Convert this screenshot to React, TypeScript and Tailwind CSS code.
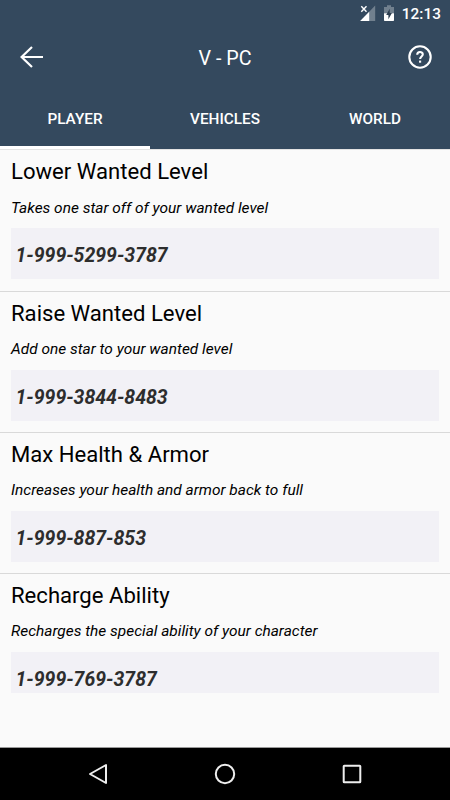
import React from 'react';

interface Cheat {
  title: string;
  description: string;
  code: string;
}

const tabs = ['PLAYER', 'VEHICLES', 'WORLD'];

const cheats: Cheat[] = [
  {
    title: 'Lower Wanted Level',
    description: 'Takes one star off of your wanted level',
    code: '1-999-5299-3787',
  },
  {
    title: 'Raise Wanted Level',
    description: 'Add one star to your wanted level',
    code: '1-999-3844-8483',
  },
  {
    title: 'Max Health & Armor',
    description: 'Increases your health and armor back to full',
    code: '1-999-887-853',
  },
  {
    title: 'Recharge Ability',
    description: 'Recharges the special ability of your character',
    code: '1-999-769-3787',
  },
];

const StatusBar: React.FC = () => (
  <div className="flex h-7 items-center justify-end pr-[9px] text-white">
    <svg width="16" height="17" viewBox="0 0 16 17" className="mr-[8px] mb-[1px]">
      <path d="M15.2 0.6V16H0.2Z" fill="#fff" fillOpacity="0.3" />
      <path d="M9.2 6.7V16H0.2Z" fill="#fff" />
      <path d="M1.3 1.3L6.5 6.7M6.5 1.3L1.3 6.7" stroke="#34495e" strokeWidth="3" />
      <path d="M1.3 1.3L6.5 6.7M6.5 1.3L1.3 6.7" stroke="#fff" strokeWidth="1.4" />
    </svg>
    <svg width="10" height="17" viewBox="0 0 10 17" className="mr-[8px] mb-[1px]">
      <path d="M3 0.3H7V2H10V8.3H0V2H3Z" fill="#fff" fillOpacity="0.3" />
      <path d="M0 8.3H10V15.2Q10 16 9.2 16H0.8Q0 16 0 15.2Z" fill="#fff" />
      <path d="M5.7 3.7L2.2 9.9H4.4V14.2L7.9 8H5.7Z" fill="#2b3d4f" />
    </svg>
    <span className="text-[15.3px] leading-5 font-medium tracking-[0.1px]">12:13</span>
  </div>
);

const Header: React.FC = () => (
  <div className="grid h-[62px] grid-cols-[1fr_auto_1fr] items-center pr-[17px] pb-[4px] pl-[19px] text-white">
    <button aria-label="Back" className="justify-self-start">
      <svg width="25" height="24" viewBox="0 0 25 24" fill="none" stroke="#fff" strokeWidth="2.2">
        <path d="M24 12H3M13 2L2.6 12L13 22" />
      </svg>
    </button>
    <h1 className="pt-[4px] pr-[2px] text-[19.7px] leading-6">V - PC</h1>
    <button aria-label="Help" className="justify-self-end">
      <svg width="26" height="26" viewBox="0 0 26 26" fill="none" stroke="#fff" strokeWidth="2.1">
        <circle cx="13" cy="13" r="10.7" />
        <path d="M10.2 10.7C10.2 7.2 15.8 7.2 15.8 10.3C15.8 12.4 13.1 12.6 13.1 15" />
        <path d="M13.1 16.6V18.7" />
      </svg>
    </button>
  </div>
);

const CheatItem: React.FC<{ cheat: Cheat }> = ({ cheat }) => (
  <div className="h-[141.2px] shrink-0 border-b border-[#d9d9d9] px-[11px] pt-[7px]">
    <h2 className="text-[22.1px] leading-7 text-black">{cheat.title}</h2>
    <p className="mt-[12.5px] text-[15.45px] leading-5 text-black italic">{cheat.description}</p>
    <div className="mt-[10.5px] flex h-[51px] items-center bg-[#f2f1f6] pt-[5px] pl-[4.5px]">
      <span className="text-[19.45px] leading-6 font-bold text-[#2d2d2d] italic">{cheat.code}</span>
    </div>
  </div>
);

const App: React.FC = () => {
  return (
    <div className="flex h-[800px] w-[450px] flex-col overflow-hidden bg-[#fafafa] font-['Roboto',sans-serif]">
      <header className="bg-[#34495e]">
        <StatusBar />
        <Header />
        <nav className="grid h-[59px] grid-cols-3 text-[15.3px] font-medium text-white">
          {tabs.map((tab, i) => (
            <button
              key={tab}
              className={`border-b-[3px] pt-[3px] ${i === 0 ? 'border-white' : 'border-transparent'}`}
            >
              {tab}
            </button>
          ))}
        </nav>
      </header>
      <main className="h-[544px] overflow-hidden border-t border-[#e3e3e3] pt-[0.4px]">
        {cheats.map((cheat) => (
          <CheatItem key={cheat.code} cheat={cheat} />
        ))}
      </main>
      <footer className="mt-auto grid h-[53px] grid-cols-[196px_58px_196px] items-center justify-items-center border-t border-[#999] bg-black">
        <svg width="20" height="22" viewBox="0 0 20 22" fill="none" stroke="#eee" strokeWidth="2" strokeLinejoin="round">
          <path d="M18 2V20L2 11Z" />
        </svg>
        <svg width="22" height="22" viewBox="0 0 22 22" fill="none" stroke="#eee" strokeWidth="2">
          <circle cx="11" cy="11" r="9.2" />
        </svg>
        <svg width="20" height="20" viewBox="0 0 20 20" fill="none" stroke="#eee" strokeWidth="2">
          <rect x="1.7" y="1.7" width="16.6" height="16.6" rx="0.6" />
        </svg>
      </footer>
    </div>
  );
};

export default App;
